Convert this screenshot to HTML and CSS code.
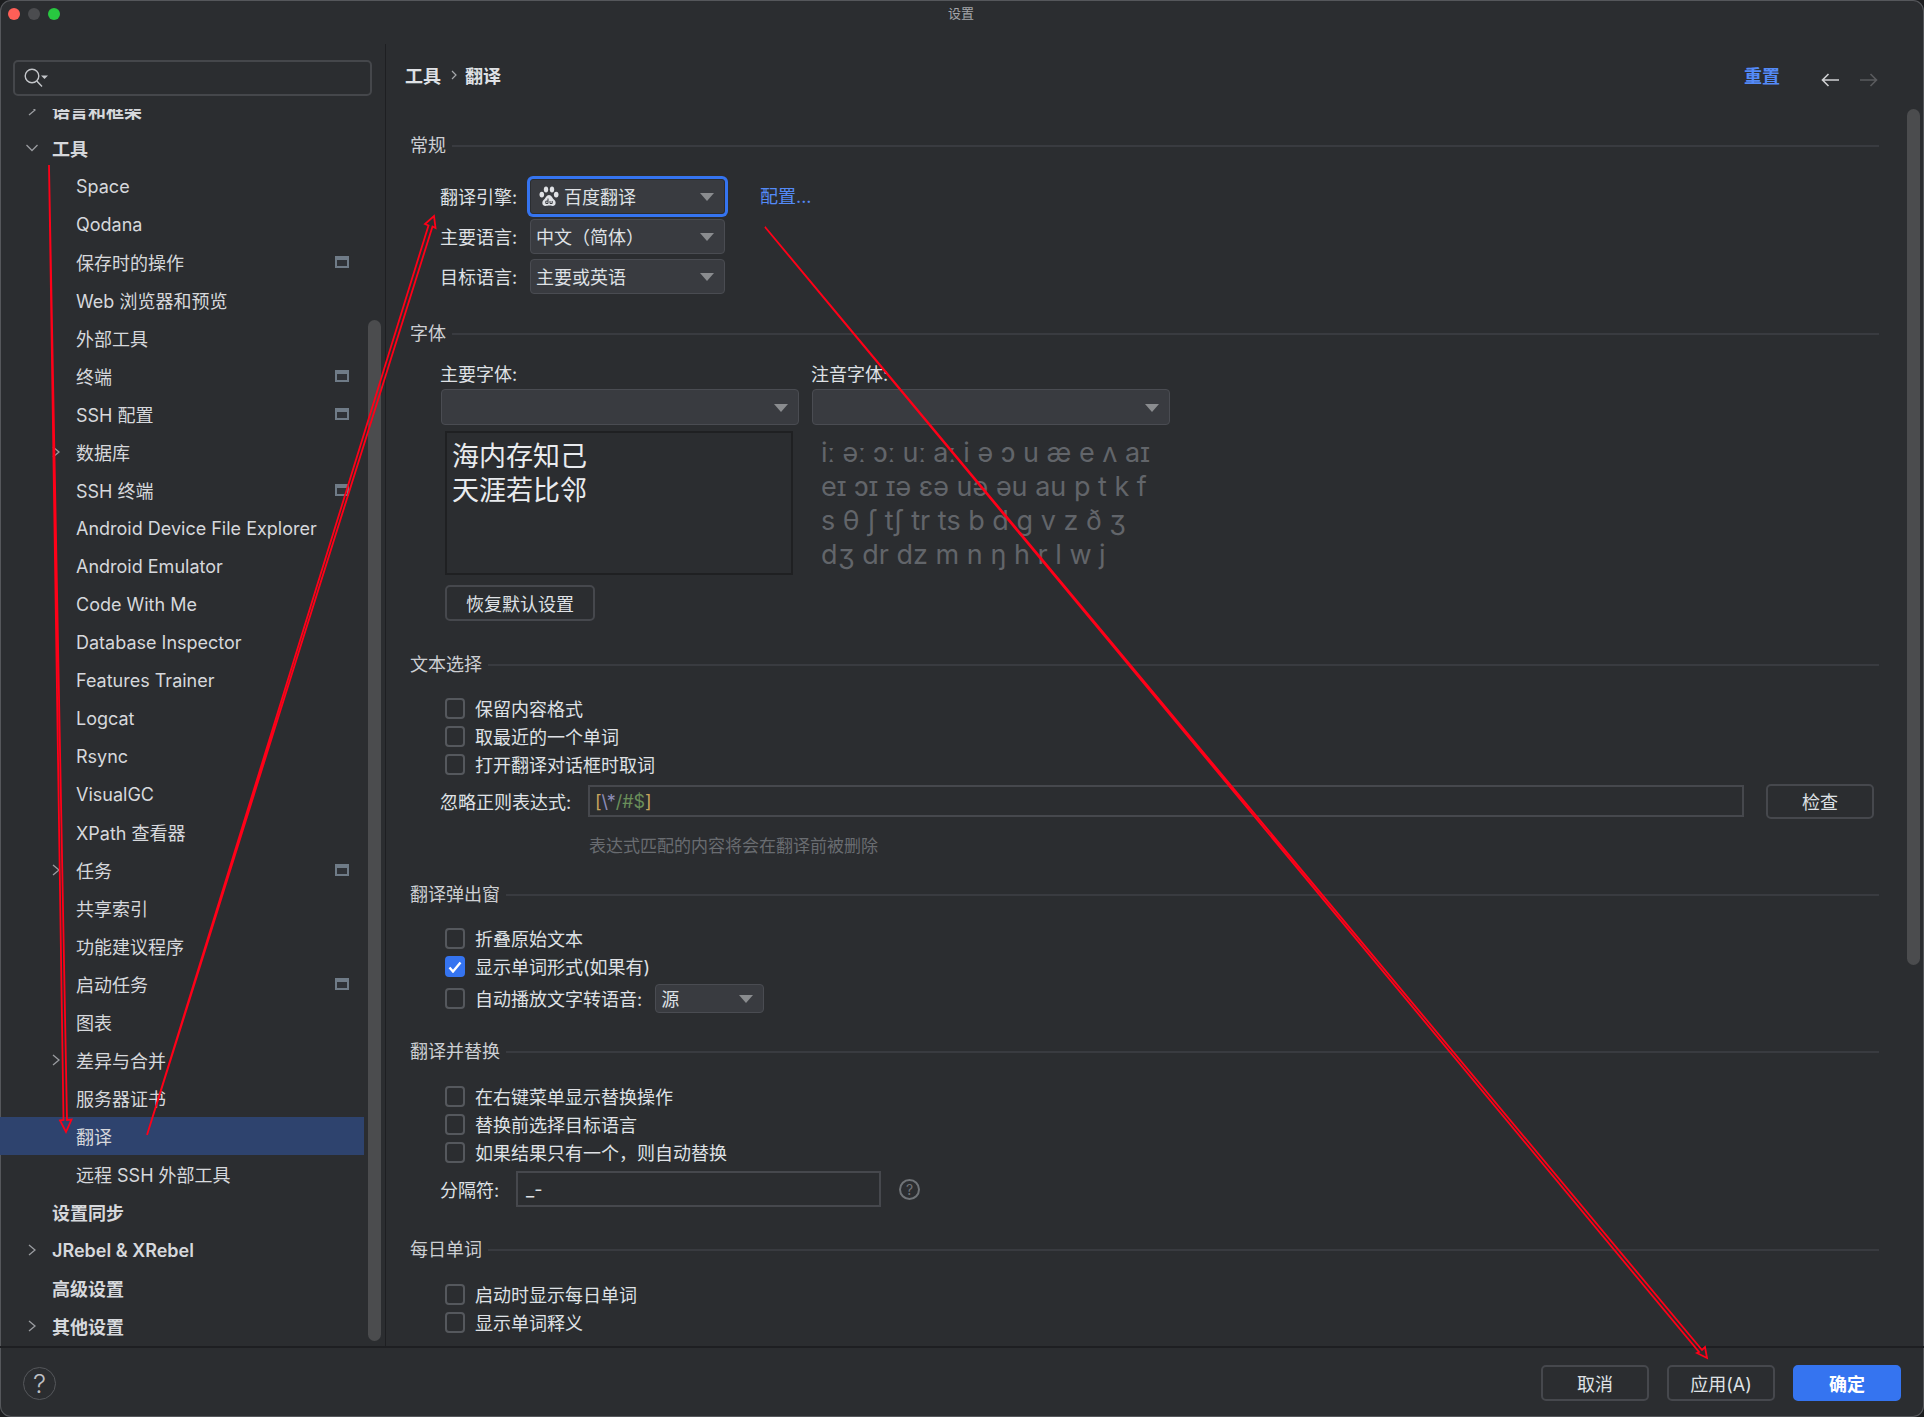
FILE: index.html
```html
<!DOCTYPE html>
<html lang="zh">
<head>
<meta charset="utf-8">
<title>设置</title>
<link rel="stylesheet" href="styles.css">
</head>
<body>
<div class="window">
  <header class="titlebar">
    <div class="lights"><i class="light red"></i><i class="light gray"></i><i class="light green"></i></div>
    <div class="wintitle">设置</div>
  </header>
  <div class="middle">
    <aside class="sidebar">
      <div class="search">
        <svg class="search-ico" width="24" height="20" viewBox="0 0 24 20"><circle cx="8" cy="8" r="6.8" fill="none" stroke="#c4c6ca" stroke-width="1.4"/><path d="M12.8 13L18 18.5" stroke="#c4c6ca" stroke-width="1.4" fill="none"/><path d="M17 7.5h7l-3.5 3.5z" fill="#c4c6ca"/></svg>
      </div>
      <nav class="nav">
        <div class="nav-clip">
          <div class="item top"><span class="slot"><svg class="chev small" width="8" height="12" viewBox="0 0 8 12"><path d="M1 1l6 5-6 5" /></svg></span>语言和框架</div>
          <div class="item top"><span class="slot"><svg class="chev" width="12" height="12" viewBox="0 0 12 12"><path d="M0.5 3l5.5 5.5L11.5 3" /></svg></span>工具</div>
          <div class="item"><span class="slot"></span>Space</div>
          <div class="item"><span class="slot"></span>Qodana</div>
          <div class="item"><span class="slot"></span>保存时的操作<svg class="proj" width="14" height="12" viewBox="0 0 14 12"><rect width="14" height="12" fill="#6f7b87"/><rect x="2" y="4" width="10" height="6" fill="#2f3237"/></svg></div>
          <div class="item"><span class="slot"></span>Web 浏览器和预览</div>
          <div class="item"><span class="slot"></span>外部工具</div>
          <div class="item"><span class="slot"></span>终端<svg class="proj" width="14" height="12" viewBox="0 0 14 12"><rect width="14" height="12" fill="#6f7b87"/><rect x="2" y="4" width="10" height="6" fill="#2f3237"/></svg></div>
          <div class="item"><span class="slot"></span>SSH 配置<svg class="proj" width="14" height="12" viewBox="0 0 14 12"><rect width="14" height="12" fill="#6f7b87"/><rect x="2" y="4" width="10" height="6" fill="#2f3237"/></svg></div>
          <div class="item"><span class="slot"><svg class="chev small" width="8" height="12" viewBox="0 0 8 12"><path d="M1 1l6 5-6 5" /></svg></span>数据库</div>
          <div class="item"><span class="slot"></span>SSH 终端<svg class="proj" width="14" height="12" viewBox="0 0 14 12"><rect width="14" height="12" fill="#6f7b87"/><rect x="2" y="4" width="10" height="6" fill="#2f3237"/></svg></div>
          <div class="item"><span class="slot"></span>Android Device File Explorer</div>
          <div class="item"><span class="slot"></span>Android Emulator</div>
          <div class="item"><span class="slot"></span>Code With Me</div>
          <div class="item"><span class="slot"></span>Database Inspector</div>
          <div class="item"><span class="slot"></span>Features Trainer</div>
          <div class="item"><span class="slot"></span>Logcat</div>
          <div class="item"><span class="slot"></span>Rsync</div>
          <div class="item"><span class="slot"></span>VisualGC</div>
          <div class="item"><span class="slot"></span>XPath 查看器</div>
          <div class="item"><span class="slot"><svg class="chev small" width="8" height="12" viewBox="0 0 8 12"><path d="M1 1l6 5-6 5" /></svg></span>任务<svg class="proj" width="14" height="12" viewBox="0 0 14 12"><rect width="14" height="12" fill="#6f7b87"/><rect x="2" y="4" width="10" height="6" fill="#2f3237"/></svg></div>
          <div class="item"><span class="slot"></span>共享索引</div>
          <div class="item"><span class="slot"></span>功能建议程序</div>
          <div class="item"><span class="slot"></span>启动任务<svg class="proj" width="14" height="12" viewBox="0 0 14 12"><rect width="14" height="12" fill="#6f7b87"/><rect x="2" y="4" width="10" height="6" fill="#2f3237"/></svg></div>
          <div class="item"><span class="slot"></span>图表</div>
          <div class="item"><span class="slot"><svg class="chev small" width="8" height="12" viewBox="0 0 8 12"><path d="M1 1l6 5-6 5" /></svg></span>差异与合并</div>
          <div class="item"><span class="slot"></span>服务器证书</div>
          <div class="item selected"><span class="slot"></span>翻译</div>
          <div class="item"><span class="slot"></span>远程 SSH 外部工具</div>
          <div class="item top"><span class="slot"></span>设置同步</div>
          <div class="item top"><span class="slot"><svg class="chev small" width="8" height="12" viewBox="0 0 8 12"><path d="M1 1l6 5-6 5" /></svg></span>JRebel &amp; XRebel</div>
          <div class="item top"><span class="slot"></span>高级设置</div>
          <div class="item top"><span class="slot"><svg class="chev small" width="8" height="12" viewBox="0 0 8 12"><path d="M1 1l6 5-6 5" /></svg></span>其他设置</div>
        </div>
      </nav>
      <div class="thumb side-thumb"></div>
    </aside>
    <main class="main">
      <div class="main-head">
        <div class="crumbs"><span>工具</span><svg class="crumb-sep" width="6" height="10" viewBox="0 0 6 10"><path d="M1 1l4 4-4 4"/></svg><span>翻译</span></div>
        <div class="head-tools">
          <a class="link reset">重置</a>
          <svg class="nav-arrow back" width="18" height="14" viewBox="0 0 18 14"><path d="M18 7H1.5M7.5 1L1.5 7l6 6"/></svg>
          <svg class="nav-arrow fwd" width="18" height="14" viewBox="0 0 18 14"><path d="M0 7h16.5M10.5 1l6 6-6 6"/></svg>
        </div>
      </div>
      <div class="content">
        <section>
          <div class="sec-head"><span>常规</span><i class="rule"></i></div>
          <div class="form-rows">
            <div class="form-row">
              <label class="flabel">翻译引擎:</label>
              <div class="combo focused">
                <svg class="paw" width="20" height="21" viewBox="0 0 20 21"><ellipse cx="2.8" cy="8.6" rx="2.3" ry="2.9" fill="#dfe1e5"/><ellipse cx="7" cy="3.6" rx="2.2" ry="3" fill="#dfe1e5"/><ellipse cx="13" cy="3.6" rx="2.2" ry="3" fill="#dfe1e5"/><ellipse cx="17.2" cy="8.6" rx="2.3" ry="2.9" fill="#dfe1e5"/><path d="M10 9C7.5 9 6.8 12 4.6 14C2.4 16 3.2 20 6.2 20C8 20 9 19.6 10 19.6C11 19.6 12 20 13.8 20C16.8 20 17.6 16 15.4 14C13.2 12 12.5 9 10 9Z" fill="#dfe1e5"/><path d="M9 12.5v5H6.8v-2.4H9M11 15v2.5h2.2V15" fill="none" stroke="#393b40" stroke-width="1"/></svg>
                <span>百度翻译</span><i class="caret"></i>
              </div>
              <a class="link config">配置...</a>
            </div>
            <div class="form-row">
              <label class="flabel">主要语言:</label>
              <div class="combo"><span>中文（简体）</span><i class="caret"></i></div>
            </div>
            <div class="form-row">
              <label class="flabel">目标语言:</label>
              <div class="combo"><span>主要或英语</span><i class="caret"></i></div>
            </div>
          </div>
        </section>
        <section class="sec-font">
          <div class="sec-head"><span>字体</span><i class="rule"></i></div>
          <div class="font-grid">
            <label class="font-label">主要字体:</label>
            <label class="font-label">注音字体:</label>
            <div class="combo wide"><i class="caret"></i></div>
            <div class="combo wide"><i class="caret"></i></div>
            <div class="preview">海内存知己<br>天涯若比邻</div>
            <div class="ipa">iː əː ɔː uː aː i ə ɔ u æ e ʌ aɪ<br>eɪ ɔɪ ɪə ɛə uə əu au p t k f<br>s θ ʃ tʃ tr ts b d g v z ð ʒ<br>dʒ dr dz m n ŋ h r l w j</div>
          </div>
          <button class="btn restore">恢复默认设置</button>
        </section>
        <section class="sec-text">
          <div class="sec-head"><span>文本选择</span><i class="rule"></i></div>
          <div class="checks">
            <div class="check"><i class="box"></i>保留内容格式</div>
            <div class="check"><i class="box"></i>取最近的一个单词</div>
            <div class="check"><i class="box"></i>打开翻译对话框时取词</div>
          </div>
          <div class="regex-row">
            <label class="regex-label">忽略正则表达式:</label>
            <div class="input regex"><span class="rx-b">[</span><span class="rx-e">\*</span><span class="rx-g">/#$</span><span class="rx-b">]</span></div>
            <button class="btn check-btn">检查</button>
          </div>
          <div class="hint">表达式匹配的内容将会在翻译前被删除</div>
        </section>
        <section class="sec-pop">
          <div class="sec-head"><span>翻译弹出窗</span><i class="rule"></i></div>
          <div class="checks">
            <div class="check"><i class="box"></i>折叠原始文本</div>
            <div class="check"><i class="box on"><svg width="14" height="12" viewBox="0 0 14 12"><path d="M1.5 6.5L5 10.5 12.5 1.5" fill="none" stroke="#fff" stroke-width="2.4"/></svg></i>显示单词形式(如果有)</div>
            <div class="check tall"><i class="box"></i>自动播放文字转语音:<div class="combo small"><span>源</span><i class="caret"></i></div></div>
          </div>
        </section>
        <section class="sec-rep">
          <div class="sec-head"><span>翻译并替换</span><i class="rule"></i></div>
          <div class="checks rep">
            <div class="check"><i class="box"></i>在右键菜单显示替换操作</div>
            <div class="check"><i class="box"></i>替换前选择目标语言</div>
            <div class="check"><i class="box"></i>如果结果只有一个，则自动替换</div>
          </div>
          <div class="sep-row">
            <label class="sep-label">分隔符:</label>
            <div class="input sep">_-</div>
            <span class="qmark">?</span>
          </div>
        </section>
        <section class="sec-day">
          <div class="sec-head"><span>每日单词</span><i class="rule"></i></div>
          <div class="checks day">
            <div class="check"><i class="box"></i>启动时显示每日单词</div>
            <div class="check"><i class="box"></i>显示单词释义</div>
          </div>
        </section>
      </div>
      <div class="thumb main-thumb"></div>
    </main>
  </div>
  <footer class="footer">
    <span class="help">?</span>
    <div class="actions">
      <button class="btn action">取消</button>
      <button class="btn action">应用(A)</button>
      <button class="btn action primary">确定</button>
    </div>
  </footer>
  <svg class="arrows" width="1924" height="1417" viewBox="0 0 1924 1417">
    <polygon points="49,165 67,1120 71.5,1119.5 66,1132 60,1120.5 63.5,1120"/>
    <polygon points="147,1135 432.5,226.5 435.5,228 434,216 425,224 428.5,225.5"/>
    <polygon points="765,227 1702,1350 1705,1347 1707,1358 1697,1353 1699,1352"/>
  </svg>
</div>
</body>
</html>
```
FILE: styles.css
```css
* { box-sizing: border-box; }
html, body { margin: 0; padding: 0; background: #1c1d1f; }
body {
  width: 1924px;
  height: 1417px;
  overflow: hidden;
  font-family: Inter, "Noto Sans CJK SC", sans-serif;
  font-size: 18px;
  color: #dfe1e5;
}
.window {
  position: relative;
  width: 1924px;
  height: 1417px;
  background: #2b2d30;
  border-radius: 11px;
  overflow: hidden;
  box-shadow: inset 0 0 0 1px #55575b;
  display: flex;
  flex-direction: column;
}
.titlebar { height: 44px; flex: none; position: relative; }
.lights { display: flex; gap: 8px; padding: 8px 0 0 8px; }
.light { width: 12px; height: 12px; border-radius: 50%; display: block; }
.red { background: #ff5f57; }
.gray { background: #4b4c4f; }
.green { background: #28c840; }
.wintitle {
  position: absolute; left: 0; right: 2px; top: 5px;
  text-align: center; font-size: 13px; line-height: 17px; color: #a4a6aa;
}
.middle { flex: 1; display: flex; min-height: 0; }
.sidebar {
  position: relative;
  width: 386px; flex: none;
  border-right: 1px solid #1e1f22;
  padding-top: 16px;
  display: flex; flex-direction: column;
}
.search {
  margin-left: 13px; width: 359px; height: 36px; flex: none;
  border: 2px solid #45474b; border-radius: 5px;
  display: flex; align-items: center; padding-left: 9px;
}
.nav { margin-top: 13px; flex: 1; overflow: hidden; width: 364px; }
.nav-clip { margin-top: -18px; }
.item {
  height: 38px; display: flex; align-items: center;
  padding: 0 15px 0 50px; white-space: nowrap; color: #d6d8dc;
}
.item.top { padding-left: 26px; font-weight: 600; }
.item.selected { background: #2e436e; }
.slot { width: 26px; flex: none; display: flex; align-items: center; }
.chev { fill: none; stroke: #9a9ca0; stroke-width: 1.3; }
.chev.small { margin-left: 2px; }
.proj { margin-left: auto; }
.thumb { position: absolute; width: 13px; border-radius: 7px; background: #4b4c4e; }
.side-thumb { left: 368px; top: 276px; height: 1021px; }
.main { position: relative; flex: 1; min-width: 0; }
.main-head {
  height: 62px; display: flex; align-items: center; justify-content: space-between;
  padding: 0 46px 0 19px;
}
.crumbs { display: flex; align-items: center; font-weight: 600; }
.crumb-sep { margin: 0 8px 0 10px; fill: none; stroke: #a5a7ab; stroke-width: 1.2; }
.head-tools { display: flex; align-items: center; }
.link { color: #548af7; }
.reset { font-weight: 600; margin-right: 41px; }
.nav-arrow { fill: none; stroke-width: 1.6; margin-top: 10px; }
.back { stroke: #cfd0d2; margin-right: 21px; }
.fwd { stroke: #5a5b5e; }
.content { padding: 27px 45px 0 25px; }
.main-thumb { left: 1521px; top: 65px; height: 856px; }
.sec-head {
  height: 24px; display: flex; align-items: center; gap: 6px; color: #cdcfd3;
}
.sec-head span { margin: 0 0 2px -1px; }
.rule { flex: 1; height: 2px; background: #393b40; display: block; margin-top: 2px; }
.form-rows { margin-top: 19px; }
.form-row { height: 40px; display: flex; align-items: center; padding-left: 29px; }
.flabel { width: 78px; margin-right: 12px; white-space: nowrap; }
.combo {
  width: 195px; height: 35px; background: #393b40;
  border: 1.5px solid #4a4c52; border-radius: 4px;
  display: flex; align-items: center; padding: 0 10px 0 5px;
  white-space: nowrap;
}
.combo.focused {
  border-color: #2b2d30; box-shadow: 0 0 0 3px #3574f0; border-radius: 3px;
}
.paw { margin: 0 5px 0 3px; flex: none; }
.caret {
  margin-left: auto; width: 0; height: 0; flex: none;
  border-left: 7px solid transparent; border-right: 7px solid transparent;
  border-top: 8px solid #8a8c8f;
  margin-top: 2px;
}
.config { margin: 0 0 2px 35px; }
.sec-font { margin-top: 25px; }
.font-grid {
  margin-top: 18px; padding-left: 30px;
  display: grid; grid-template-columns: 358px 358px; column-gap: 13px;
}
.font-label { height: 24px; line-height: 24px; margin: 0 0 2px -1px; }
.combo.wide { width: 358px; height: 36px; }
.preview {
  margin: 6px 6px 0 4px; height: 144px;
  border: 2px solid #1f2022;
  padding: 7px 5px 5px;
  font-size: 27px; line-height: 34px; color: #e9ebee;
}
.ipa {
  margin: 6px 0 0 9px; padding-top: 5px;
  font-size: 27px; line-height: 34px; color: #62656a; white-space: nowrap;
}
.btn {
  font: inherit; color: #dfe1e5; background: transparent;
  border: 2px solid #46484d; border-radius: 5px; padding: 0;
}
.restore { display: block; margin: 10px 0 0 34px; width: 150px; height: 36px; }
.sec-text { margin-top: 31px; }
.checks { margin-top: 18px; padding-left: 34px; }
.checks.rep { margin-top: 19px; }
.check { height: 28px; display: flex; align-items: center; white-space: nowrap; }
.box {
  width: 20px; height: 21px; border: 2px solid #55585d; border-radius: 4px;
  margin: 1px 10px 0 0; flex: none; display: flex; align-items: center; justify-content: center;
}
.box.on { background: #3574f0; border-color: #3574f0; }
.regex-row { margin-top: 5px; height: 36px; display: flex; align-items: center; padding-left: 29px; }
.regex-label { width: 148px; flex: none; white-space: nowrap; }
.input {
  background: transparent; border: 2px solid #46484d;
  display: flex; align-items: center; white-space: nowrap;
}
.regex { width: 1156px; height: 32px; padding-left: 5px; flex: none; }
.rx-b { color: #c8a55c; }
.rx-e { color: #8d8db8; }
.rx-g { color: #6a8f5a; }
.check-btn { margin-left: 22px; width: 108px; height: 35px; flex: none; }
.hint { margin-top: 15px; height: 24px; line-height: 24px; padding-left: 178px; font-size: 17px; color: #696c70; }
.sec-pop { margin-top: 24px; }
.check.tall { height: 32px; margin-top: 2px; }
.combo.small { width: 109px; height: 29px; margin-left: 13px; padding-left: 5px; }
.sec-rep { margin-top: 25px; }
.sep-row { margin-top: 5px; height: 36px; display: flex; align-items: center; padding-left: 29px; }
.sep-label { width: 76px; flex: none; white-space: nowrap; }
.sep { width: 365px; height: 36px; padding-left: 8px; flex: none; }
.qmark {
  margin-left: 18px; width: 21px; height: 21px; border: 2px solid #6f7377; border-radius: 50%;
  display: flex; align-items: center; justify-content: center;
  font-size: 14px; color: #6f7377;
}
.sec-day { margin-top: 30px; }
.checks.day { margin-top: 19px; }
.footer {
  height: 71px; flex: none; border-top: 2px solid #1e1f22;
  display: flex; align-items: center; justify-content: space-between;
  padding: 0 23px;
}
.help {
  width: 33px; height: 33px; border: 1px solid #55575b; border-radius: 50%; margin-top: 2px;
  display: flex; align-items: center; justify-content: center;
  font-size: 26px; font-weight: 300; color: #bdbfc3;
}
.actions { display: flex; gap: 18px; }
.action { width: 108px; height: 36px; }
.primary { background: #3574f0; border-color: #3574f0; color: #fff; font-weight: 600; }
.arrows { position: absolute; left: 0; top: 0; pointer-events: none; }
.arrows polygon { fill: none; stroke: #ff0018; stroke-width: 1.8; }
```
